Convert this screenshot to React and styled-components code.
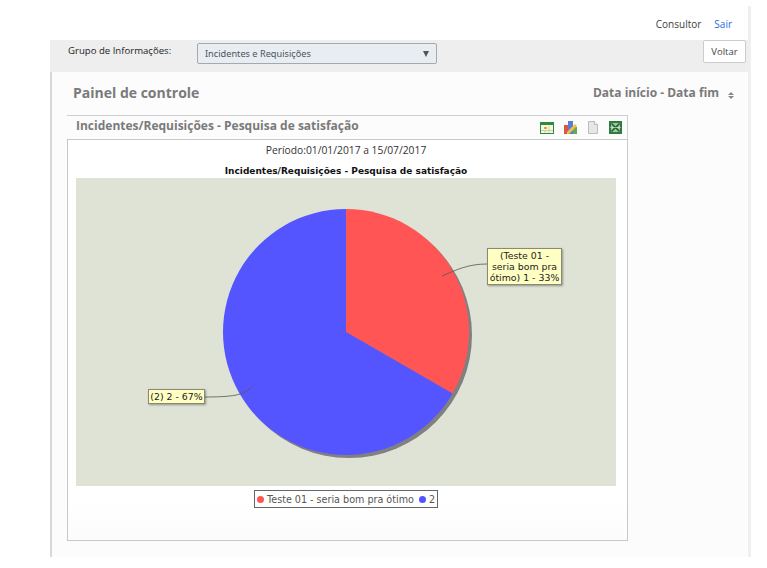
import styled, { createGlobalStyle } from 'styled-components';

const GlobalStyle = createGlobalStyle`
  html, body { margin: 0; padding: 0; background: #fff; }
  body { font-family: "Open Sans", sans-serif; }
  * { box-sizing: border-box; }
`;

const Page = styled.div`
  width: 767px;
  height: 568px;
  padding: 6px 0 0 50px;
  overflow: hidden;
`;

const Shell = styled.div`
  width: 701px;
  height: 551px;
  border-right: 3px solid #efefef;
  display: flex;
  flex-direction: column;
`;

const TopBar = styled.div`
  height: 34px;
  flex: none;
  display: flex;
  justify-content: flex-end;
  align-items: flex-end;
  gap: 13px;
  padding: 0 16px 9px 0;
  font-size: 10px;
  line-height: 13px;
`;

const TopLink = styled.span`
  color: ${({ $accent }) => ($accent ? '#2a6be0' : '#3c3c3c')};
`;

const InfoBar = styled.div`
  height: 32px;
  flex: none;
  background: #eeeeee;
  display: flex;
  align-items: flex-start;
  padding-left: 18px;
  position: relative;
`;

const InfoLabel = styled.span`
  width: 129px;
  font-size: 9.6px;
  line-height: 13px;
  margin-top: 4px;
  color: #222;
`;

const SelectBox = styled.div`
  width: 240px;
  height: 21px;
  margin-top: 3px;
  background: #e8edf2;
  border: 1px solid #a3a9ae;
  border-radius: 2px;
  display: flex;
  align-items: center;
  justify-content: space-between;
  padding: 0 7px;
  font-family: "Noto Sans", sans-serif;
  font-size: 9.2px;
  color: #4a5560;
`;

const Caret = styled.span`
  width: 0;
  height: 0;
  border-left: 3px solid transparent;
  border-right: 3px solid transparent;
  border-top: 6px solid #555;
`;

const BackButton = styled.button`
  position: absolute;
  top: 0;
  right: 2px;
  width: 43px;
  height: 23px;
  background: #fff;
  border: 1px solid #cccccc;
  border-radius: 2px;
  padding: 0;
  font-family: "Open Sans", sans-serif;
  font-size: 9.5px;
  color: #444;
`;

const Content = styled.div`
  flex: 1;
  background: #fcfcfc;
  border-left: 2px solid #d8d8d8;
  padding: 11px 0 0 15px;
  min-height: 0;
`;

const ContentHead = styled.div`
  display: flex;
  justify-content: space-between;
  align-items: center;
  height: 19px;
  padding: 0 14px 0 6px;
  margin-bottom: 13px;
  color: #7a7a7a;
  font-weight: 700;
`;

const PageTitle = styled.h1`
  margin: 0;
  font-size: 14px;
  font-weight: 700;
`;

const DateRange = styled.div`
  display: flex;
  align-items: center;
  gap: 9px;
  font-size: 12px;
`;

const SortIcon = styled.span`
  display: flex;
  flex-direction: column;
  gap: 1px;
  margin-top: 5px;
  &::before, &::after {
    content: '';
    width: 0;
    height: 0;
    border-left: 3px solid transparent;
    border-right: 3px solid transparent;
  }
  &::before { border-bottom: 3px solid #888; }
  &::after { border-top: 3px solid #888; }
`;

const Panel = styled.section`
  width: 561px;
`;

const PanelHead = styled.div`
  height: 24px;
  border-top: 1px solid #cfcfcf;
  border-right: 1px solid #cfcfcf;
  display: flex;
  align-items: center;
  justify-content: space-between;
  padding: 0 5px 0 9px;
`;

const PanelTitle = styled.h2`
  margin: 0 0 4px;
  font-size: 12px;
  font-weight: 700;
  color: #7a7a7a;
`;

const IconRow = styled.div`
  display: flex;
  gap: 10px;
  align-items: center;
`;

const PanelBody = styled.div`
  height: 402px;
  background: #fff linear-gradient(#fff 360px, #fcfcfc);
  border: 1px solid #c8c8c8;
  padding: 3px 0 0 8px;
  display: flex;
  flex-direction: column;
`;

const Period = styled.div`
  width: 540px;
  text-align: center;
  font-size: 10.3px;
  line-height: 14px;
  color: #333;
`;

const ChartTitle = styled.div`
  width: 540px;
  margin-top: 7px;
  text-align: center;
  font-family: "DejaVu Sans", sans-serif;
  font-weight: 700;
  font-size: 9px;
  line-height: 14px;
  color: #111;
`;

const Plot = styled.div`
  position: relative;
  width: 540px;
  height: 308px;
  background: #dee3d6;
  svg { display: block; }
`;

const Callout = styled.div`
  position: absolute;
  left: ${({ $x }) => $x}px;
  top: ${({ $y }) => $y}px;
  width: ${({ $w }) => $w}px;
  background: #ffffc4;
  border: 1px solid #8a8a70;
  box-shadow: 1px 1px 2px rgba(0, 0, 0, 0.35);
  padding: 1px 0;
  text-align: center;
  font-family: "DejaVu Sans", sans-serif;
  font-size: 9.4px;
  line-height: 11px;
  color: #222;
  white-space: nowrap;
`;

const Legend = styled.div`
  align-self: flex-start;
  margin: 4px 0 0 178px;
  width: 184px;
  height: 18px;
  background: #fff;
  border: 1px solid #666;
  display: flex;
  align-items: center;
  gap: 3px;
  padding-left: 2px;
  font-family: "DejaVu Sans", sans-serif;
  font-size: 9.6px;
  color: #555;
`;

const Dot = styled.span`
  width: 7px;
  height: 7px;
  border-radius: 50%;
  background: ${({ $color }) => $color};
  margin-left: ${({ $gap }) => $gap || 0}px;
`;

const TableIcon = () => (
  <svg width="14" height="12" viewBox="0 0 14 12">
    <rect x="0.5" y="0.5" width="13" height="11" fill="#f4f6e6" stroke="#2f8a3a" />
    <rect x="1" y="1" width="12" height="2" fill="#2f8a3a" />
    <rect x="4" y="5" width="3" height="2" fill="#eda51a" />
    <path d="M1 8.5H13M5 8.5V11M9 4V11" stroke="#c6d2a8" />
  </svg>
);

const ChartEditIcon = () => (
  <svg width="13" height="13" viewBox="0 0 13 13">
    <rect x="0" y="4" width="4" height="9" fill="#d9544a" />
    <rect x="4" y="0" width="5" height="13" fill="#5b7fd0" />
    <rect x="9" y="6" width="4" height="7" fill="#6aa84f" />
    <path d="M3 11L11 3L13 5L5 13H3Z" fill="#efc04a" />
  </svg>
);

const DocIcon = () => (
  <svg width="12" height="13" viewBox="0 0 12 13">
    <path d="M1.5 0.5H7.5L10.5 3.5V12.5H1.5Z" fill="#e6e6e6" stroke="#bdbdbd" />
    <path d="M7.5 0.5V3.5H10.5" fill="#fff" stroke="#bdbdbd" />
  </svg>
);

const ExcelIcon = () => (
  <svg width="13" height="13" viewBox="0 0 13 13">
    <rect width="13" height="13" fill="#2f7a3c" />
    <rect x="2" y="2" width="9" height="9" fill="#9cc8a0" />
    <path d="M2.5 2.5L10.5 10.5M10.5 2.5L2.5 10.5" stroke="#1f5f2c" strokeWidth="1.6" />
    <path d="M1 6.5H12" stroke="#d8ead9" strokeWidth="0.6" />
  </svg>
);

// pie centre and radius in plot coordinates
const cx = 270;
const cy = 154;
const r = 123;
const sliceEnd = { x: cx + r * Math.sin((2 * Math.PI) / 3), y: cy - r * Math.cos((2 * Math.PI) / 3) };

const PieChart = () => (
  <svg width="540" height="308" viewBox="0 0 540 308">
    <circle cx={cx + 3} cy={cy + 3} r={r} fill="#808080" />
    <path d={`M${cx} ${cy}V${cy - r}A${r} ${r} 0 0 1 ${sliceEnd.x} ${sliceEnd.y}Z`} fill="#ff5555" />
    <path d={`M${cx} ${cy}L${sliceEnd.x} ${sliceEnd.y}A${r} ${r} 0 1 1 ${cx} ${cy - r}Z`} fill="#5555ff" />
    <path d="M366 98C380 92 392 86 411 86" fill="none" stroke="#555" strokeWidth="0.8" />
    <path d="M129 219C162 219 168 216 176 209" fill="none" stroke="#555" strokeWidth="0.8" />
  </svg>
);

const App = () => (
  <>
    <GlobalStyle />
    <Page>
      <Shell>
        <TopBar>
          <TopLink>Consultor</TopLink>
          <TopLink $accent>Sair</TopLink>
        </TopBar>
        <InfoBar>
          <InfoLabel>Grupo de Informações:</InfoLabel>
          <SelectBox>
            Incidentes e Requisições
            <Caret />
          </SelectBox>
          <BackButton type="button">Voltar</BackButton>
        </InfoBar>
        <Content>
          <ContentHead>
            <PageTitle>Painel de controle</PageTitle>
            <DateRange>
              Data início - Data fim
              <SortIcon />
            </DateRange>
          </ContentHead>
          <Panel>
            <PanelHead>
              <PanelTitle>Incidentes/Requisições - Pesquisa de satisfação</PanelTitle>
              <IconRow>
                <TableIcon />
                <ChartEditIcon />
                <DocIcon />
                <ExcelIcon />
              </IconRow>
            </PanelHead>
            <PanelBody>
              <Period>Período:01/01/2017 a 15/07/2017</Period>
              <ChartTitle>Incidentes/Requisições - Pesquisa de satisfação</ChartTitle>
              <Plot>
                <PieChart />
                <Callout $x={411} $y={70} $w={75}>
                  (Teste 01 -<br />
                  seria bom pra<br />
                  ótimo) 1 - 33%
                </Callout>
                <Callout $x={72} $y={211} $w={57}>
                  (2) 2 - 67%
                </Callout>
              </Plot>
              <Legend>
                <Dot $color="#ff5555" />
                Teste 01 - seria bom pra ótimo
                <Dot $color="#5555ff" $gap={2} />
                2
              </Legend>
            </PanelBody>
          </Panel>
        </Content>
      </Shell>
    </Page>
  </>
);

export default App;
